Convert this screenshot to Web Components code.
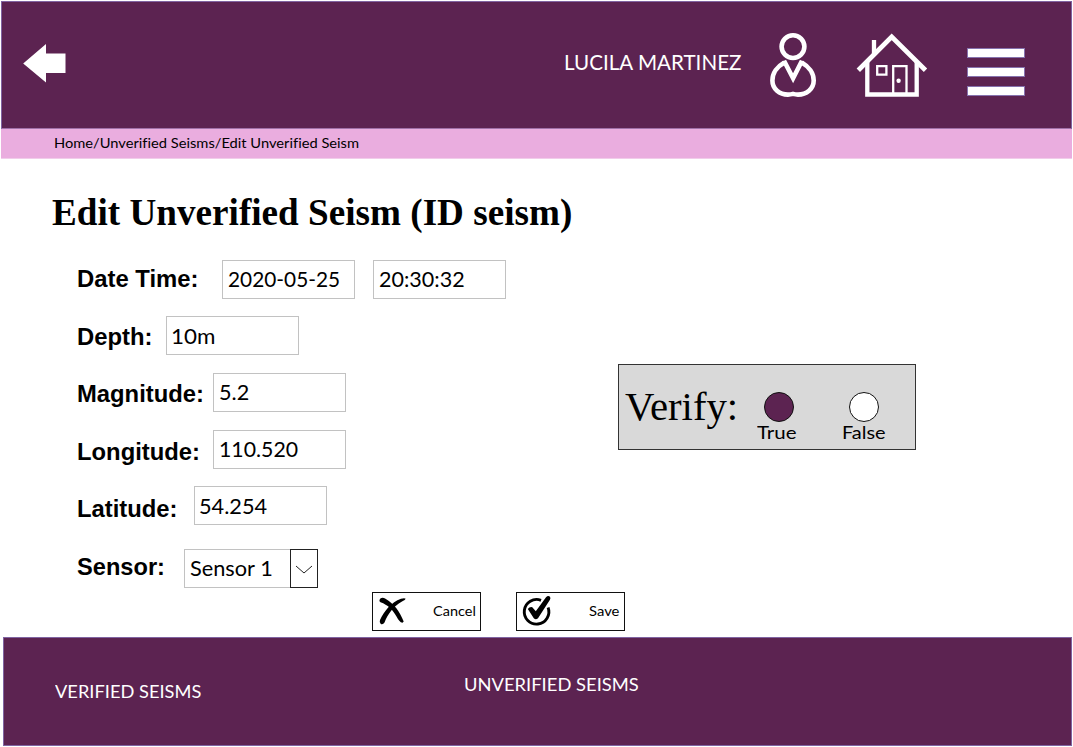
<!DOCTYPE html>
<html lang="en">
<head>
<meta charset="utf-8">
<title>Edit Unverified Seism</title>
<style>
html, body { margin: 0; background: #fff; }
body { width: 1073px; height: 747px; overflow: hidden; }
</style>
</head>
<body>
<seism-app></seism-app>
<script>
const define = (name, html, setup) => {
  const template = document.createElement('template');
  template.innerHTML = html;
  customElements.define(name, class extends HTMLElement {
    connectedCallback() {
      if (this.shadowRoot) return;
      this.attachShadow({ mode: 'open' }).append(template.content.cloneNode(true));
      if (setup) setup(this, this.shadowRoot);
    }
  });
};

/* A line of text whose drawn glyphs span exactly the "w" attribute, in pixels.
   The tiny letter spacing keeps "fi" as two letters. */
const pen = document.createElement('canvas').getContext('2d');
define('fit-text', `
<style>
:host { display: block; flex: none; white-space: nowrap; letter-spacing: 0.01px; }
span { display: inline-block; transform-origin: 0 50%; }
</style><span><slot></slot></span>`, (host, root) => {
  const w = parseFloat(host.getAttribute('w'));
  const cs = getComputedStyle(host);
  pen.font = `${cs.fontWeight} ${cs.fontSize} ${cs.fontFamily}`;
  pen.letterSpacing = '0.01px';
  const m = pen.measureText(host.textContent);
  const scale = w / (m.actualBoundingBoxRight + m.actualBoundingBoxLeft);
  host.style.width = w + 'px';
  root.querySelector('span').style.transform =
    `translateX(${m.actualBoundingBoxLeft * scale}px) scaleX(${scale})`;
});

define('app-header', `
<style>
:host { display: flex; box-sizing: border-box; width: 1071px; height: 128px; margin-left: 1px;
  background: #5c2351; border: 1px solid #8064a2; border-bottom-color: #a070a8; padding-left: 21px; color: #fff; font: 21px/26px Lato, sans-serif; }
svg { display: block; flex: none; }
fit-text { margin: 47px 0 0 498px; }
.user { margin: 30px 0 0 26px; }
.home { margin: 30px 0 0 37px; }
.menu { display: flex; flex-direction: column; gap: 9px; margin: 46px 0 0 38px; }
.menu i { box-sizing: border-box; width: 58px; height: 10px; background: #fff; border: 1px solid #8672ae; }
</style>
<svg width="44" height="126" viewBox="23 2 44 126"><path fill="#fff" d="M23.2 63.5 46 44V53.5H65.500V73H46V82.5Z"/></svg>
<fit-text w="176.5">LUCILA MARTINEZ</fit-text>
<svg class="user" width="50" height="68" viewBox="768 32 50 68" fill="none" stroke="#fff" stroke-width="4.6">
<circle cx="793" cy="46.6" r="11.4"/>
<path stroke-linejoin="round" d="M784.4 62.4C777 66.500 772.4 73.500 772.4 80.500C772.4 89 779.500 94.600 788 94.600Q790.500 94.600 793 93.900Q795.500 94.600 798 94.600C806.500 94.600 813.700 89 813.700 80.500C813.700 73.500 809 66.500 801.700 62.400"/>
<path stroke-linejoin="miter" d="M784 60.800 793.100 78.300 802 60.800"/>
</svg>
<svg class="home" width="74" height="68" viewBox="855 32 74 68" fill="none" stroke="#fff">
<path stroke-width="4.800" d="M858.300 70.300 891.700 36.900 925.500 70.300"/>
<path stroke-width="4.300" d="M874 54V40M867.300 61V94.500H916.700V61"/>
<path stroke-width="2.300" d="M877.200 66.200H886.400V74.700H877.200ZM893.200 94V66.200H906.500V94"/>
<circle cx="898.600" cy="80.700" r="2.200" fill="#fff" stroke="none"/>
</svg>
<div class="menu"><i></i><i></i><i></i></div>`);

define('app-breadcrumb', `
<style>
:host { display: block; box-sizing: border-box; width: 1071px; height: 30px; margin-left: 1px; padding: 4px 0 0 54px;
  background: #eaaddf; border-bottom: 1px solid #f1cdea; color: #000; font: 14px/20px Lato, sans-serif; }
</style><fit-text w="303.5">Home/Unverified Seisms/Edit Unverified Seism</fit-text>`);

define('field-row', `
<style>
:host { display: flex; align-items: flex-start; }
</style><slot></slot>`);

define('field-label', `
<style>
:host { display: block; flex: none; color: #000; font: bold 24px/28px "Liberation Sans", Arial, sans-serif; margin-top: var(--drop, 5px); }
</style><fit-text></fit-text>`, (host, root) => {
  const text = document.createElement('fit-text');
  text.setAttribute('w', host.getAttribute('w'));
  text.textContent = host.getAttribute('text');
  root.querySelector('fit-text').replaceWith(text);
});

define('text-field', `
<style>
:host { display: block; flex: none; box-sizing: border-box; width: 133px; height: 39px; border: 1px solid #c2c2c2;
  background: #fff; padding-left: var(--inset, 5px); color: #000; font: 21px/35px Lato, sans-serif; }
:host([low]) { line-height: 37px; }
</style><slot></slot>`);

define('select-field', `
<style>
:host { display: flex; flex: none; box-sizing: border-box; width: 134px; height: 39px; font: 21px/35px Lato, sans-serif; color: #000; }
.value { box-sizing: border-box; width: 106px; border: 1px solid #c2c2c2; border-right: 0; padding-left: 5px; }
.drop { box-sizing: border-box; width: 28px; border: 1px solid #222; }
svg { display: block; }
</style><div class="value"><slot></slot></div>
<div class="drop"><svg width="26" height="37" viewBox="291 550 26 37"><path d="M296 566 304 573 312 566" fill="none" stroke="#222" stroke-width="1"/></svg></div>`);

define('radio-option', `
<style>
:host { display: flex; flex-direction: column; align-items: center; flex: none; font: 18px/20px Lato, sans-serif; color: #000; }
i { box-sizing: border-box; width: 30px; height: 30px; border: 1px solid #111; border-radius: 50%; background: #fff; }
:host([checked]) i { background: #5c2351; }
</style><i></i><slot></slot>`);

define('verify-panel', `
<style>
:host { display: flex; box-sizing: border-box; width: 298px; height: 86px; border: 1px solid #333; background: #d9d9d9;
  color: #000; padding-left: 6px; }
.title { font: 40px/46px "Liberation Serif", serif; margin-top: 19px; }
radio-option { margin-top: 27px; }
.true { margin-left: 27.5px; }
.false { margin-left: 47px; }
.true fit-text { margin-left: -6px; }
</style>
<fit-text class="title" w="110">Verify:</fit-text>
<radio-option class="true" checked><fit-text w="39">True</fit-text></radio-option>
<radio-option class="false"><fit-text w="42">False</fit-text></radio-option>`);

define('action-button', `
<style>
:host { display: flex; justify-content: space-between; flex: none; box-sizing: border-box; width: 109px; height: 39px; border: 1px solid #111;
  background: #fff; padding: 0 5px 0 4px; font: 14px/35px Lato, sans-serif; color: #000; }
</style><slot name="icon"></slot><slot></slot>`);

define('app-footer', `
<style>
:host { display: flex; box-sizing: border-box; width: 1069px; height: 109px; margin-left: 3px; background: #5c2351;
  border: 1px solid #8064a2; padding-left: 51px; color: #fff; font: 18px/22px Lato, sans-serif; }
.a { margin-top: 42px; }
.b { margin: 35px 0 0 264px; }
</style>
<fit-text class="a" w="145.5">VERIFIED SEISMS</fit-text>
<fit-text class="b" w="173">UNVERIFIED SEISMS</fit-text>`);

define('seism-app', `
<style>
:host { display: block; width: 1073px; height: 747px; padding-top: 1px; box-sizing: border-box; }
main { box-sizing: border-box; height: 478px; padding-top: 31px; }
.title { margin: 0 0 0 52px; font: bold 37px/46px "Liberation Serif", serif; color: #000; }
.body { display: flex; height: 328px; margin-top: 24px; }
.form { width: 540px; padding-left: 78px; }
.form field-row { height: 39px; margin-bottom: 18px; }
.form .near { margin-bottom: 17px; }
verify-panel { margin-top: 104px; }
.actions { display: flex; gap: 35px; margin: 4px 0 0 372px; }
svg { display: block; }
</style>
<app-header></app-header>
<app-breadcrumb></app-breadcrumb>
<main>
  <fit-text class="title" w="519">Edit Unverified Seism (ID seism)</fit-text>
  <div class="body">
    <div class="form">
      <field-row class="near"><field-label text="Date Time:" w="118.500"></field-label>
        <text-field style="margin-left:25.500px"><fit-text w="111">2020-05-25</fit-text></text-field>
        <text-field style="margin-left:18px"><fit-text w="85.5">20:30:32</fit-text></text-field></field-row>
      <field-row><field-label text="Depth:" w="72.5" style="--drop:7px"></field-label>
        <text-field low style="margin-left:15.5px;--inset:5px"><fit-text w="42">10m</fit-text></text-field></field-row>
      <field-row><field-label text="Magnitude:" w="124" style="--drop:7px"></field-label>
        <text-field style="margin-left:11px;--inset:6px"><fit-text w="29">5.2</fit-text></text-field></field-row>
      <field-row class="near"><field-label text="Longitude:" w="120" style="--drop:8px"></field-label>
        <text-field style="margin-left:15px;--inset:6px"><fit-text w="78">110.520</fit-text></text-field></field-row>
      <field-row style="margin-bottom:24px"><field-label text="Latitude:" w="97.5" style="--drop:9px"></field-label>
        <text-field low style="margin-left:18.5px"><fit-text w="67">54.254</fit-text></text-field></field-row>
      <field-row><field-label text="Sensor:" w="86" style="--drop:4px;margin-left:-1px"></field-label>
        <select-field style="margin-left:21px"><fit-text w="82">Sensor 1</fit-text></select-field></field-row>
    </div>
    <verify-panel></verify-panel>
  </div>
  <div class="actions">
    <action-button>
      <svg slot="icon" width="32" height="37" viewBox="377 593 32 37"><path d="M379.500 600C380.500 597.500 383 597.300 385.500 598.800C394 604 399.500 611 403.700 621.500L402.500 622.700C400 622.500 398.500 620 396.500 616.500C392.500 609.500 388 605 380.500 602.300Q379 601.500 379.500 600Z"/><path d="M405.700 598.700Q405.500 600 402 601.500C393 606.500 388 614 384.500 622.500Q383 625 380.800 624Q379 622.800 380 620C384.500 611 391 602.500 401 598.800Q404.500 597.700 405.700 598.700Z"/></svg>
      <fit-text w="42.5">Cancel</fit-text></action-button>
    <action-button>
      <svg slot="icon" width="32" height="37" viewBox="521.5 593 32 37"><path d="M541.500 600.300A12.300 12.300 0 1 0 548.600 607.500" fill="none" stroke="#000" stroke-width="2.900"/><path d="M528.300 609Q530 606.600 532.800 607.200L536.300 611.300 546.500 597.300Q548.500 595 550.500 596.700Q551.500 598 550.300 600L538.500 618.200Q536.300 620.500 534.300 618.200Z"/></svg>
      <fit-text w="30">Save</fit-text></action-button>
  </div>
</main>
<app-footer></app-footer>`);
</script>
</body>
</html>
